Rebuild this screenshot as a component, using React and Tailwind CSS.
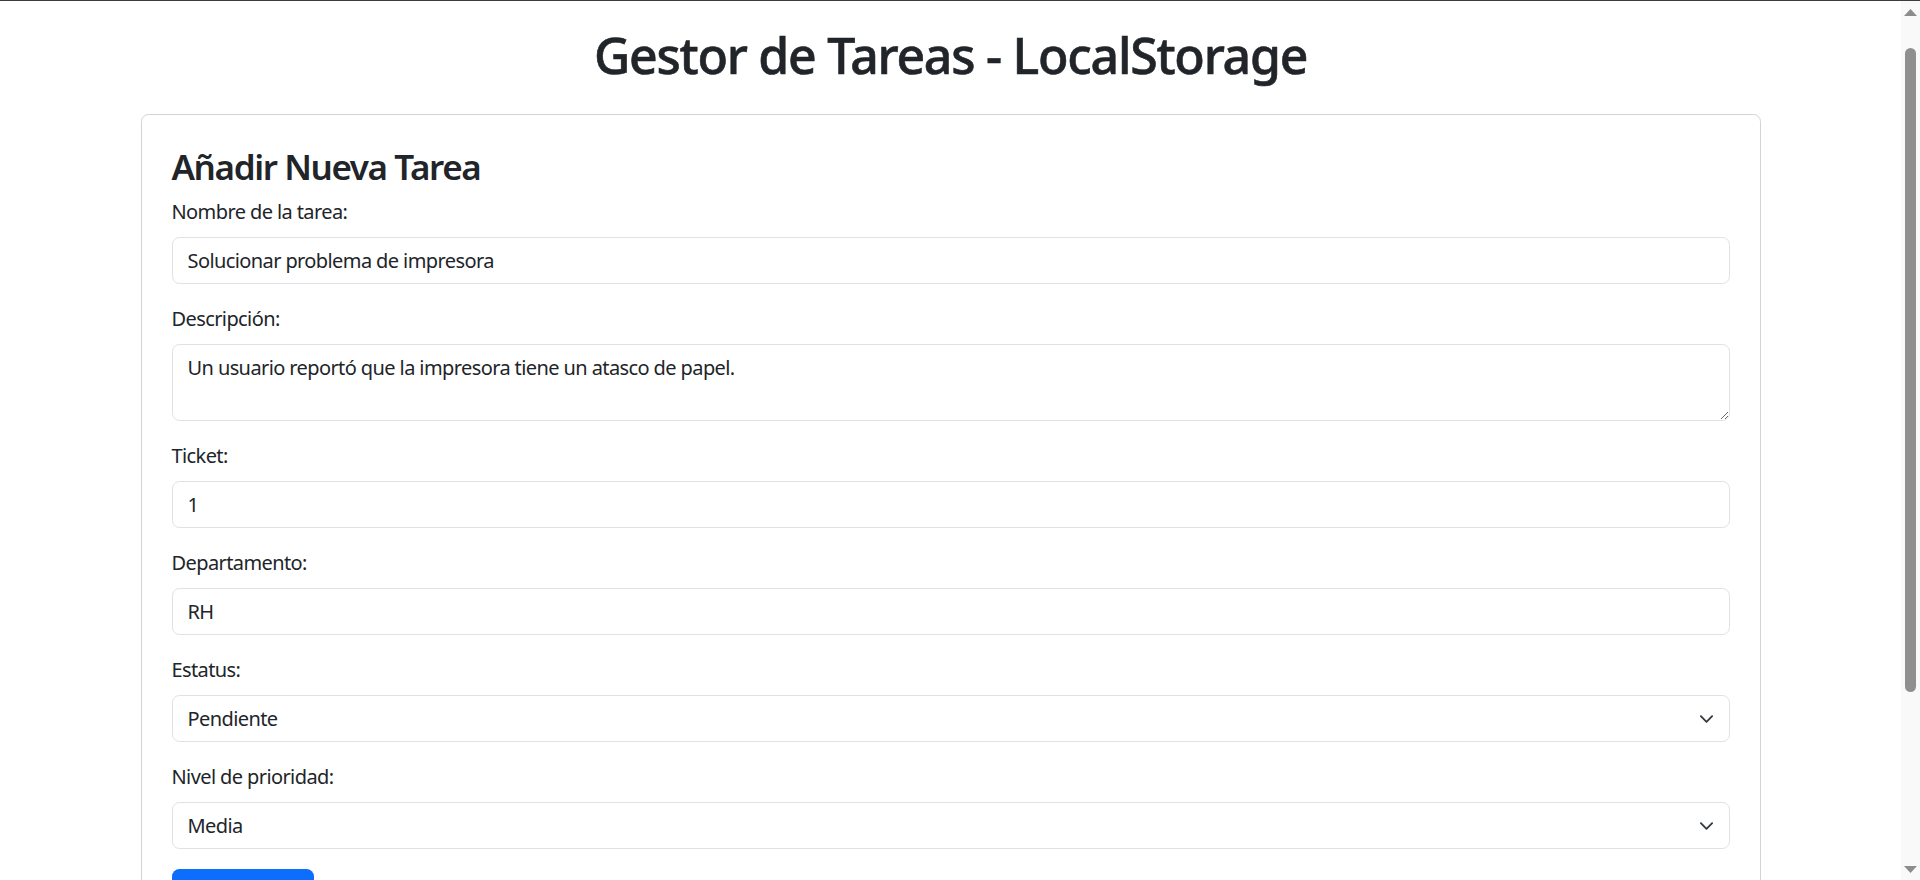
import React from 'react';

const font = { fontFamily: '"Noto Sans", "Open Sans", sans-serif' };

const Chevron = () => (
    <svg
        className="pointer-events-none absolute right-[16px] top-1/2 -translate-y-1/2"
        width="15"
        height="15"
        viewBox="0 0 16 16"
        fill="none"
    >
        <path d="m2 5 6 6 6-6" stroke="#343a40" strokeWidth="2" strokeLinecap="round" strokeLinejoin="round" />
    </svg>
);

const Field = ({ label, children }) => (
    <div className="mb-[20px]">
        <label className="mb-[10px] block text-[20px] leading-[30px] tracking-[-0.03em]">{label}</label>
        {children}
    </div>
);

const inputCls =
    'block h-[47px] w-full rounded-[7.5px] border border-[#dee2e6] bg-white px-[15px] text-[20px] leading-[30px] tracking-[-0.03em] text-[#212529] outline-none';

const App = () => (
    <div className="flex h-[880px] w-full flex-col overflow-hidden bg-white text-[#212529]" style={font}>
        {/* window edge */}
        <div className="h-px w-full shrink-0 bg-[#3c3c3c]" />

        <div className="flex min-h-0 flex-1">
            <main className="min-w-0 flex-1 overflow-hidden">
                <div className="mx-auto w-[1650px] px-[15px]">
                    <h1 className="mb-[29px] mt-[24px] text-center text-[50px] font-medium leading-[60px] tracking-[-0.025em] [-webkit-text-stroke:0.6px_#212529]">
                        Gestor de Tareas - LocalStorage
                    </h1>

                    <div className="rounded-[7.5px] border border-[#d3d3d3] p-[30px] pt-[31px]">
                        <h3 className="mb-[9px] text-[35px] font-semibold leading-[42px] tracking-[-0.04em]">
                            Añadir Nueva Tarea
                        </h3>

                        <form onSubmit={e => e.preventDefault()}>
                            <Field label="Nombre de la tarea:">
                                <input className={inputCls} defaultValue="Solucionar problema de impresora" />
                            </Field>

                            <Field label="Descripción:">
                                <textarea
                                    rows={2}
                                    className="block h-[77px] w-full resize-y rounded-[7.5px] border border-[#dee2e6] bg-white px-[15px] py-[7.5px] text-[20px] leading-[30px] tracking-[-0.03em] text-[#212529] outline-none"
                                    defaultValue="Un usuario reportó que la impresora tiene un atasco de papel."
                                />
                            </Field>

                            <Field label="Ticket:">
                                <input className={inputCls} defaultValue="1" />
                            </Field>

                            <Field label="Departamento:">
                                <input className={inputCls} defaultValue="RH" />
                            </Field>

                            <Field label="Estatus:">
                                <div className="relative">
                                    <select className={`${inputCls} appearance-none`} defaultValue="Pendiente">
                                        <option>Pendiente</option>
                                        <option>En proceso</option>
                                        <option>Completada</option>
                                    </select>
                                    <Chevron />
                                </div>
                            </Field>

                            <Field label="Nivel de prioridad:">
                                <div className="relative">
                                    <select className={`${inputCls} appearance-none`} defaultValue="Media">
                                        <option>Baja</option>
                                        <option>Media</option>
                                        <option>Alta</option>
                                    </select>
                                    <Chevron />
                                </div>
                            </Field>

                            <button
                                type="submit"
                                className="h-[47px] w-[142px] rounded-[7.5px] bg-[#0d6efd] text-[20px] text-white"
                            >
                                Añadir Tarea
                            </button>
                        </form>
                    </div>
                </div>
            </main>

            {/* scrollbar */}
            <div className="flex w-[19px] shrink-0 flex-col items-center bg-[#f9f9f9] pb-[7px] pt-[8px]">
                <svg width="13" height="7" viewBox="0 0 13 7">
                    <path d="M6.5 0 13 7H0z" fill="#8c8c8c" />
                </svg>
                <div className="mt-[32px] h-[644px] w-[11px] rounded-full bg-[#8f8f8f]" />
                <div className="flex-1" />
                <svg width="13" height="7" viewBox="0 0 13 7">
                    <path d="M0 0h13L6.5 7z" fill="#8c8c8c" />
                </svg>
            </div>
        </div>
    </div>
);

export default App;
